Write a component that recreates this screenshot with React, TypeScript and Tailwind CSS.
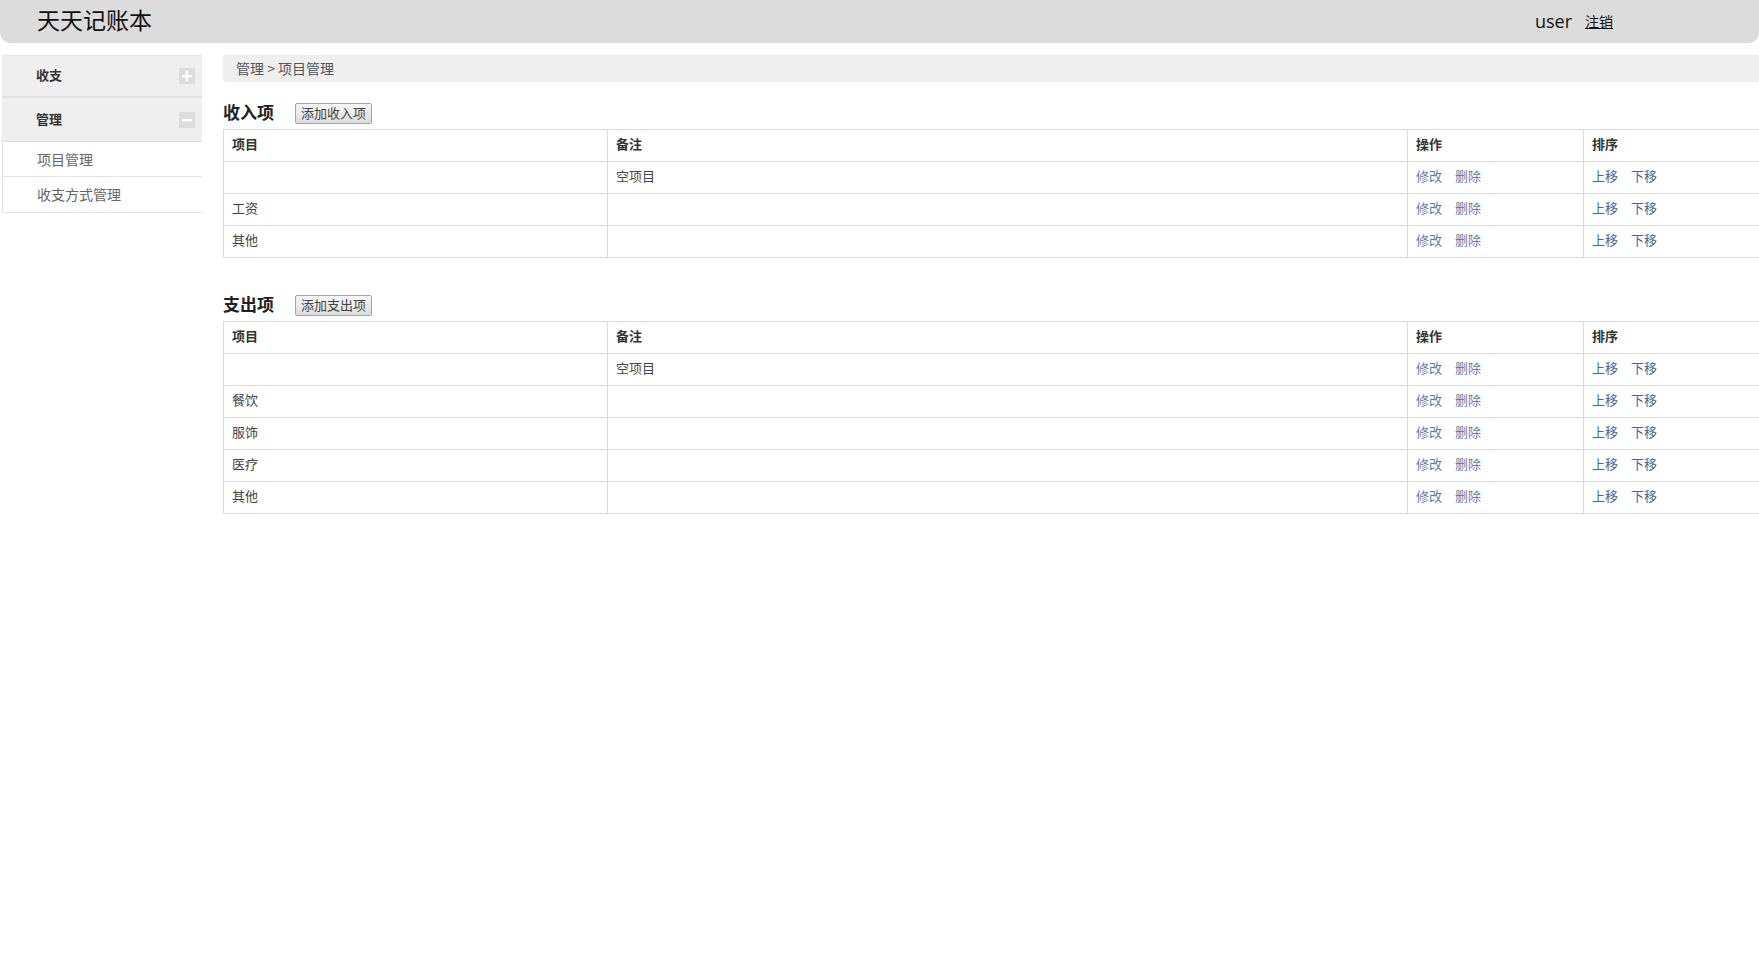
import { useState } from "react";

type Item = { name: string; note: string };

const incomeItems: Item[] = [
  { name: "", note: "空项目" },
  { name: "工资", note: "" },
  { name: "其他", note: "" },
];

const expenseItems: Item[] = [
  { name: "", note: "空项目" },
  { name: "餐饮", note: "" },
  { name: "服饰", note: "" },
  { name: "医疗", note: "" },
  { name: "其他", note: "" },
];

const ToggleBox = ({ open }: { open: boolean }) => (
  <span className="w-[16px] h-[16px] bg-[#dddddd] flex items-center justify-center">
    <svg width="12" height="12" viewBox="0 0 12 12">
      <rect x="1" y="5" width="10" height="2.4" fill="#fff" />
      {!open && <rect x="4.8" y="1" width="2.4" height="10" fill="#fff" />}
    </svg>
  </span>
);

const Sidebar = () => {
  const [openGroup, setOpenGroup] = useState("管理");
  return (
    <div className="w-[200px] ml-[2px] mt-[12px] shrink-0">
      {/* 收支 */}
      <button
        onClick={() => setOpenGroup(openGroup === "收支" ? "" : "收支")}
        className="w-full h-[43px] flex items-center justify-between pl-[34px] pr-[7px] bg-[#efefef] border-t border-[#e6e6e6] border-b-2 border-b-[#e2e2e2] text-[13px] font-bold text-[#333]"
      >
        <span className="pb-[2px]">收支</span>
        <ToggleBox open={openGroup === "收支"} />
      </button>
      {/* 管理 */}
      <button
        onClick={() => setOpenGroup(openGroup === "管理" ? "" : "管理")}
        className="w-full h-[44px] flex items-center justify-between pl-[34px] pr-[7px] bg-[#efefef] border-b border-[#e2e2e2] text-[13px] font-bold text-[#333]"
      >
        <span className="pb-[2px]">管理</span>
        <ToggleBox open={openGroup === "管理"} />
      </button>
      {openGroup === "管理" && (
        <ul className="border-l border-[#e3e3e3]">
          <li className="h-[35px] flex items-center pl-[34px] border-b border-[#e3e3e3] text-[14px] text-[#666]">
            项目管理
          </li>
          <li className="h-[36px] flex items-center pl-[34px] border-b border-[#e3e3e3] text-[14px] text-[#666]">
            收支方式管理
          </li>
        </ul>
      )}
    </div>
  );
};

const ItemTable = ({ title, addLabel, items }: { title: string; addLabel: string; items: Item[] }) => (
  <div>
    <div className="flex items-center h-[21px] mb-[5px]">
      <h2 className="text-[17px] font-bold text-[#222] w-[72px] leading-none pb-[4px]">{title}</h2>
      <button className="h-[21px] px-[5px] text-[13px] leading-none pb-[2px] text-[#444] border border-[#a3a3a3] rounded-[2px] bg-gradient-to-b from-[#f7f7f7] to-[#dddddd]">
        {addLabel}
      </button>
    </div>
    <table className="w-[1540px] border-collapse text-[13px] text-[#444] table-fixed">
      <colgroup>
        <col className="w-[384px]" />
        <col className="w-[800px]" />
        <col className="w-[176px]" />
        <col />
      </colgroup>
      <thead>
        <tr className="h-[32px] text-left text-[#333]">
          <th className="border border-[#dadada] pl-[8px] pb-[3px] font-bold">项目</th>
          <th className="border border-[#dadada] pl-[8px] pb-[3px] font-bold">备注</th>
          <th className="border border-[#dadada] pl-[8px] pb-[3px] font-bold">操作</th>
          <th className="border border-[#dadada] pl-[8px] pb-[3px] font-bold">排序</th>
        </tr>
      </thead>
      <tbody>
        {items.map((item, i) => (
          <tr key={i} className="h-[32px]">
            <td className="border border-[#dadada] pl-[8px] pb-[3px]">{item.name}</td>
            <td className="border border-[#dadada] pl-[8px] pb-[3px]">{item.note}</td>
            <td className="border border-[#dadada] pl-[8px] pb-[3px]">
              <a className="text-[#5b7fab] mr-[13px] cursor-pointer">修改</a>
              <a className="text-[#5b7fab] cursor-pointer">删除</a>
            </td>
            <td className="border border-[#dadada] pl-[8px] pb-[3px]">
              <a className="text-[#40689c] mr-[13px] cursor-pointer">上移</a>
              <a className="text-[#40689c] cursor-pointer">下移</a>
            </td>
          </tr>
        ))}
      </tbody>
    </table>
  </div>
);

export default function App() {
  return (
    <div className="w-[1759px] min-h-[963px] overflow-hidden bg-white font-['Noto_Sans_CJK_SC','Noto_Sans',sans-serif]">
      {/* Header */}
      <header className="h-[43px] bg-[#dcdcdc] rounded-b-[10px] flex items-center justify-between pl-[37px] pr-[146px]">
        <h1 className="text-[23px] text-[#111] leading-none pb-[4px]">天天记账本</h1>
        <div className="flex items-center gap-[13px]">
          <span className="text-[18px] text-[#111] font-['Open_Sans','Noto_Sans',sans-serif]">user</span>
          <a className="text-[14px] text-[#111] underline cursor-pointer">注销</a>
        </div>
      </header>

      <div className="flex">
        <Sidebar />

        <main className="ml-[21px] mt-[12px] flex-1 min-w-0">
          <div className="h-[27px] bg-[#efefef] rounded-l-[3px] flex items-center pl-[13px] pb-[1px] text-[14px] text-[#555]">
            管理 &gt; 项目管理
          </div>

          <div className="mt-[21px]">
            <ItemTable title="收入项" addLabel="添加收入项" items={incomeItems} />
          </div>

          <div className="mt-[37px]">
            <ItemTable title="支出项" addLabel="添加支出项" items={expenseItems} />
          </div>
        </main>
      </div>
    </div>
  );
}
